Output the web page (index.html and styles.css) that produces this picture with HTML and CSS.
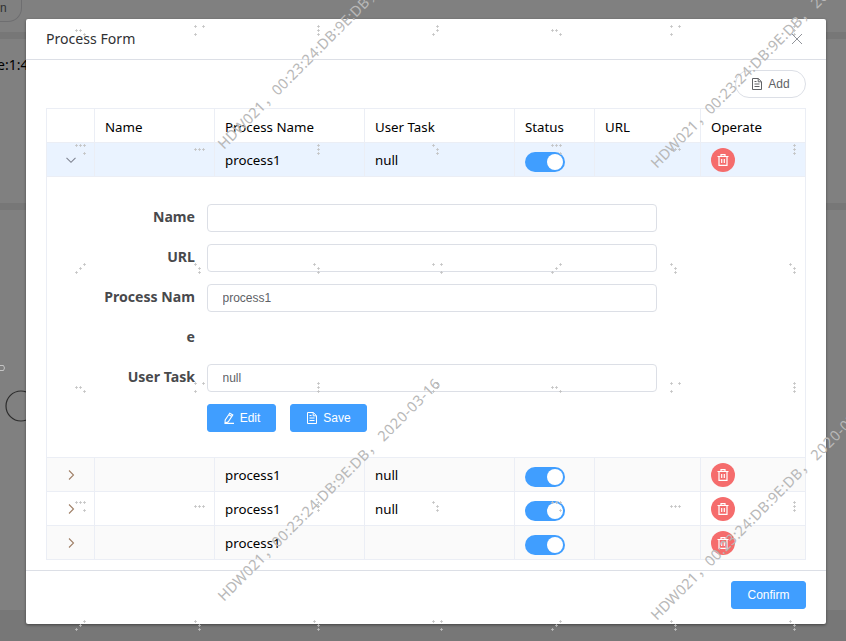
FILE: index.html
```
<!DOCTYPE html>
<html lang="en">
<head>
<meta charset="utf-8">
<title>Process Form</title>
<link rel="stylesheet" href="styles.css">
</head>
<body>
<svg width="0" height="0" class="defs">
  <defs>
    <symbol id="doc" viewBox="0 0 12 12"><path d="M1.5 .5H7.3L10.5 3.7V11.5H1.5ZM7.2 .7V3.8H10.3M3.5 3.5H5.5M3.5 6H8.5M3.5 8.5H8.5" fill="none" stroke="currentColor"/></symbol>
    <symbol id="edit" viewBox="0 0 12 12"><path d="M6.8 1.2 9.8 2.9 5.3 9.7 2 11 2.2 7.9ZM5.8 2.8 8.8 4.5M1.5 11.4H11" fill="none" stroke="currentColor" stroke-width="1.1"/></symbol>
    <symbol id="trash" viewBox="0 0 12 12"><path d="M.5 2.5H11.5M4 2.3V.7H8V2.3M2 2.5V11.4H10V2.5M4.7 5V9M7.3 5V9" fill="none" stroke="currentColor" stroke-width="1.2"/></symbol>
    <symbol id="right" viewBox="0 0 12 12"><path d="M4 1.500 8.500 6 4 10.500" fill="none" stroke="currentColor" stroke-width="1.1"/></symbol>
    <symbol id="down" viewBox="0 0 12 12"><path d="M1.5 3.8 6 8.3 10.5 3.8" fill="none" stroke="currentColor" stroke-width="1.1"/></symbol>
  </defs>
</svg>
<div class="page">
  <div class="band band-top"><span class="pill">n</span></div>
  <div class="band band-mid"><span>e:1:4</span></div>
  <div class="band band-main">
    <svg width="26" height="400"><path d="M0 155.500H3.500L4.500 158 3.500 160.500H0" fill="none" stroke="#c4c4c4"/><circle cx="21" cy="196" r="15" fill="none" stroke="#2c2c2c" stroke-width="1.200"/></svg>
  </div>
</div>
<div class="dialog">
  <header><h1>Process Form</h1><svg class="close" width="12" height="12"><path d="M1 1 11 11M11 1 1 11" stroke="#909399" fill="none"/></svg></header>
  <main>
    <div class="toolbar"><button class="btn round"><svg><use href="#doc"/></svg>Add</button></div>
    <div class="table">
      <div class="row head"><div></div><div>Name</div><div>Process Name</div><div>User Task</div><div>Status</div><div>URL</div><div>Operate</div></div>
      <div class="row current"><div class="exp"><svg><use href="#down"/></svg></div><div></div><div>process1</div><div>null</div><div><i class="switch"></i></div><div></div><div><span class="del"><svg><use href="#trash"/></svg></span></div></div>
      <div class="detail">
        <div class="item"><label>Name</label><input></div>
        <div class="item"><label>URL</label><input></div>
        <div class="item"><label>Process Nam<br>e</label><input value="process1"></div>
        <div class="item"><label>User Task</label><input value="null"></div>
        <div class="actions"><button class="btn primary edit"><svg><use href="#edit"/></svg>Edit</button><button class="btn primary save"><svg><use href="#doc"/></svg>Save</button></div>
      </div>
      <div class="row stripe"><div class="exp warm"><svg><use href="#right"/></svg></div><div></div><div>process1</div><div>null</div><div><i class="switch"></i></div><div></div><div><span class="del"><svg><use href="#trash"/></svg></span></div></div>
      <div class="row"><div class="exp warm"><svg><use href="#right"/></svg></div><div></div><div>process1</div><div>null</div><div><i class="switch"></i></div><div></div><div><span class="del"><svg><use href="#trash"/></svg></span></div></div>
      <div class="row stripe"><div class="exp warm"><svg><use href="#right"/></svg></div><div></div><div>process1</div><div></div><div><i class="switch"></i></div><div></div><div><span class="del"><svg><use href="#trash"/></svg></span></div></div>
    </div>
  </main>
  <footer><button class="btn primary confirm">Confirm</button></footer>
</div>
<svg class="watermark" width="846" height="641" viewBox="0 0 846 641">
  <defs>
    <g id="mark">
      <text x="0" y="0" textLength="60">HDW021</text><text x="61" y="0">，</text>
      <text x="76" y="0" textLength="131">00:23:24:DB:9E:DB</text><text x="208" y="0">，</text>
      <text x="226" y="0" textLength="81">2020-03-16</text>
    </g>
    <path id="dot" d="M-1.500 0H1.500M0 -1.500V1.500"/>
    <g id="dots-a">
      <use href="#dot" x="76.500" y="30.500"/><use href="#dot" x="80.500" y="30.500"/><use href="#dot" x="84.500" y="34.500"/>
      <use href="#dot" x="195.500" y="26.500"/><use href="#dot" x="203.500" y="26.500"/><use href="#dot" x="195.500" y="34.500"/>
      <use href="#dot" x="318.500" y="26.500"/><use href="#dot" x="318.500" y="30.500"/><use href="#dot" x="318.500" y="34.500"/>
      <use href="#dot" x="437.500" y="26.500"/><use href="#dot" x="437.500" y="30.500"/><use href="#dot" x="433.500" y="34.500"/>
      <use href="#dot" x="552.500" y="30.500"/><use href="#dot" x="556.500" y="30.500"/><use href="#dot" x="560.500" y="34.500"/>
      <use href="#dot" x="671.500" y="26.500"/><use href="#dot" x="679.500" y="26.500"/><use href="#dot" x="671.500" y="34.500"/>
      <use href="#dot" x="794.500" y="26.500"/><use href="#dot" x="794.500" y="30.500"/><use href="#dot" x="794.500" y="34.500"/>
    </g>
    <g id="dots-b">
      <use href="#dot" x="76.500" y="145.500"/><use href="#dot" x="80.500" y="145.500"/><use href="#dot" x="84.500" y="145.500"/><use href="#dot" x="84.500" y="153.500"/>
      <use href="#dot" x="195.500" y="149.500"/><use href="#dot" x="199.500" y="149.500"/><use href="#dot" x="203.500" y="149.500"/>
      <use href="#dot" x="318.500" y="145.500"/><use href="#dot" x="318.500" y="149.500"/><use href="#dot" x="318.500" y="153.500"/>
      <use href="#dot" x="433.500" y="145.500"/><use href="#dot" x="437.500" y="149.500"/><use href="#dot" x="437.500" y="153.500"/>
      <use href="#dot" x="552.500" y="145.500"/><use href="#dot" x="556.500" y="145.500"/><use href="#dot" x="560.500" y="145.500"/><use href="#dot" x="560.500" y="153.500"/>
      <use href="#dot" x="671.500" y="149.500"/><use href="#dot" x="675.500" y="149.500"/><use href="#dot" x="679.500" y="149.500"/>
      <use href="#dot" x="794.500" y="145.500"/><use href="#dot" x="794.500" y="149.500"/><use href="#dot" x="794.500" y="153.500"/>
    </g>
    <g id="dots-c">
      <use href="#dot" x="84.500" y="264.500"/><use href="#dot" x="80.500" y="268.500"/><use href="#dot" x="76.500" y="272.500"/>
      <use href="#dot" x="195.500" y="264.500"/><use href="#dot" x="199.500" y="268.500"/><use href="#dot" x="199.500" y="272.500"/>
      <use href="#dot" x="314.500" y="264.500"/><use href="#dot" x="318.500" y="268.500"/><use href="#dot" x="318.500" y="272.500"/>
      <use href="#dot" x="433.500" y="264.500"/><use href="#dot" x="441.500" y="264.500"/><use href="#dot" x="441.500" y="272.500"/>
      <use href="#dot" x="560.500" y="264.500"/><use href="#dot" x="556.500" y="268.500"/><use href="#dot" x="552.500" y="272.500"/>
      <use href="#dot" x="671.500" y="264.500"/><use href="#dot" x="675.500" y="268.500"/><use href="#dot" x="675.500" y="272.500"/>
      <use href="#dot" x="790.500" y="264.500"/><use href="#dot" x="794.500" y="268.500"/><use href="#dot" x="794.500" y="272.500"/>
    </g>
  </defs>
  <g class="dots"><use href="#dots-a"/><use href="#dots-b"/><use href="#dots-c"/><use href="#dots-a" y="357"/><use href="#dots-b" y="357"/><use href="#dots-c" y="357"/></g>
  <g class="marks">
    <use href="#mark" transform="translate(224 150) rotate(-45)"/>
    <use href="#mark" transform="translate(657 169) rotate(-45)"/>
    <use href="#mark" transform="translate(224 602) rotate(-45)"/>
    <use href="#mark" transform="translate(657 621) rotate(-45)"/>
  </g>
</svg>
</body>
</html>
```
FILE: styles.css
```
* { box-sizing: border-box; }
body { margin: 0; height: 641px; overflow: hidden; position: relative; background: #777; font: 13.300px "Noto Sans", "Noto Sans CJK SC", sans-serif; color: #000; }
.defs { position: absolute; }
.page { height: 641px; display: flex; flex-direction: column; gap: 7px; }
.band { background: #808080; }
.band-top { height: 32px; }
.pill { display: block; width: 22px; height: 22px; border: 1px solid #6e6e70; border-width: 0 1px 1px 0; border-radius: 0 0 14px 0; font: 12px/16px "Liberation Sans", sans-serif; color: #303133; }
.band-mid { height: 164px; padding: 15px 0 0 0; line-height: 22px; font-size: 14px; white-space: nowrap; }
.band-mid span { margin-left: -3px; }
.band-main { height: 400px; }
.dialog { position: absolute; left: 26px; top: 19px; width: 800px; height: 605px; display: flex; flex-direction: column; background: #fff; border-radius: 2px; box-shadow: 0 1px 3px rgba(0,0,0,.45); }
header { height: 41px; padding: 0 23px 0 20px; display: flex; align-items: center; justify-content: space-between; border-bottom: 1px solid #dcdfe6; }
h1 { margin: 0 0 2px; font-size: 14.100px; font-weight: 400; color: #303133; }
main { height: 510px; padding: 10px 20px; }
.toolbar { display: flex; justify-content: flex-end; height: 38px; }
.btn { height: 28px; display: flex; align-items: center; justify-content: center; padding: 0; border: 1px solid #dcdfe6; background: #fff; color: #606266; font: 12px "Liberation Sans", sans-serif; border-radius: 3px; }
.btn svg { width: 12px; height: 12px; margin-right: 5px; }
.round { width: 71px; border-radius: 14px; }
.primary { background: #409eff; border-color: #409eff; color: #fff; }
.table { border: 1px solid #ebeef5; border-width: 1px 0 0 1px; }
.row { display: grid; grid-template-columns: 48px 120px 150px 150px 80px 106px 105px; height: 34px; }
.row > div { display: flex; align-items: center; padding: 1px 10px 0; border-right: 1px solid #ebeef5; border-bottom: 1px solid #ebeef5; line-height: 20px; }
.head > div { padding-top: 3px; }
.current { background: #eaf3ff; }
.stripe { background: #fafafa; }
.row > .exp { justify-content: center; padding: 0; color: #7f8390; }
.row > .warm { color: #a08068; }
.exp svg { width: 12px; height: 12px; }
.switch { width: 40px; height: 20px; margin-top: 3px; border-radius: 10px; background: #409eff; display: flex; justify-content: flex-end; padding: 2px 2px 2px 0; }
.switch::after { content: ""; width: 16px; height: 16px; border-radius: 50%; background: #fff; }
.del { width: 24px; height: 24px; border-radius: 50%; background: #f56c6c; color: #fff; display: flex; align-items: center; justify-content: center; }
.del svg { width: 12px; height: 12px; }
.detail { height: 281px; padding: 21px 0 0 20px; border-right: 1px solid #ebeef5; border-bottom: 1px solid #ebeef5; }
.item { display: flex; align-items: flex-start; }
label { width: 128px; font-size: 14.100px; font-weight: 700; line-height: 40px; margin-top: -1px; margin-bottom: 1px; text-align: right; color: #48494c; }
input { width: 450px; height: 28px; margin: 6px 0 0 12px; border: 1px solid #dcdfe6; border-radius: 4px; padding: 0 14.500px; font: 12px "Liberation Sans", sans-serif; color: #606266; }
.actions { display: flex; gap: 14px; padding: 6px 0 0 140px; }
.edit { width: 69px; }
.save { width: 77px; }
footer { height: 54px; border-top: 1px solid #dcdfe6; padding: 10px 20px; display: flex; justify-content: flex-end; }
.confirm { width: 75px; }
.watermark { position: absolute; left: 0; top: 0; pointer-events: none; }
.dots { stroke: rgba(192,192,192,.75); stroke-width: 1; }
.marks { font: 14.500px "Noto Sans", "Noto Sans CJK SC", sans-serif; fill: #b8b8b8; }
```
